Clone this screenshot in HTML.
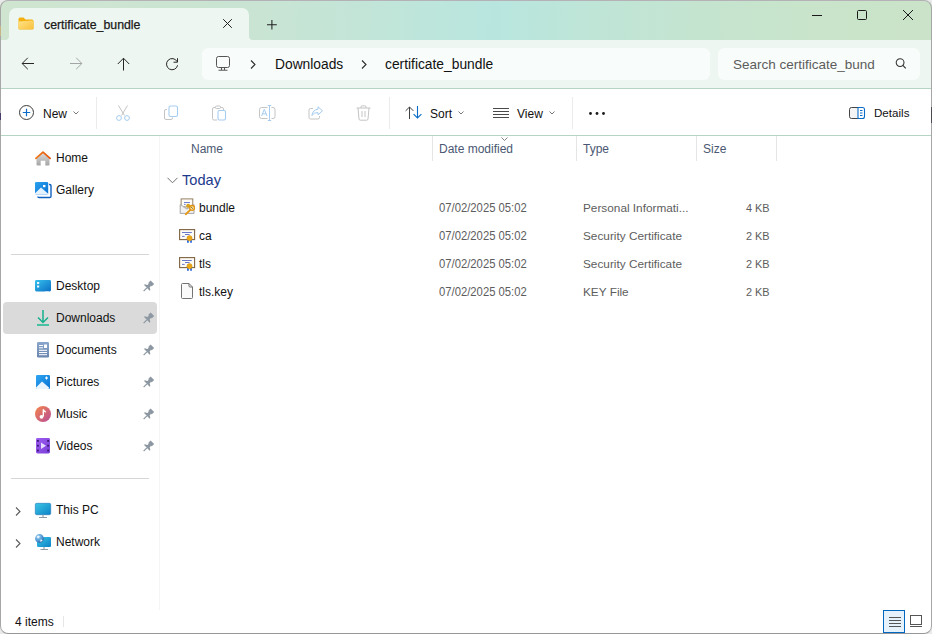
<!DOCTYPE html>
<html><head><meta charset="utf-8">
<style>
*{box-sizing:border-box;margin:0;padding:0}
html,body{width:932px;height:634px;overflow:hidden;background:#e9e9e9;font-family:"Liberation Sans",sans-serif;color:#1b1b1b}
.a{position:absolute}
svg{position:absolute;overflow:visible}
.win{position:absolute;left:0;top:0;width:932px;height:634px;border-radius:8px;overflow:hidden;background:#fff}
.bd{position:absolute;left:0;top:0;width:932px;height:634px;border:1px solid #a6a6a6;border-top-color:#b4b2b6;border-bottom-color:#979797;border-radius:8px}
.t{position:absolute;white-space:nowrap;font-size:12px;line-height:14px}
</style></head><body>
<div class="win">
  <!-- title bar -->
  <div class="a" style="left:0;top:0;width:932px;height:40px;background:linear-gradient(93deg,#cfe5d0 0%,#c9e4d3 28%,#bfe5da 44%,#b8e6df 53%,#bee5d8 62%,#c5e4cf 76%,#c9e4ca 88%,#cae3c9 100%)"></div>
  <!-- tab -->
  <div class="a" style="left:9px;top:8px;width:240px;height:32px;background:#edf6f0;border-radius:7px 7px 0 0"></div>
  <div class="a" style="left:5px;top:36px;width:4px;height:4px;background:#edf6f0"></div>
  <div class="a" style="left:1px;top:28px;width:8px;height:12px;background:#cfe5d0;border-radius:0 0 4px 0"></div>
  <div class="a" style="left:249px;top:36px;width:4px;height:4px;background:#edf6f0"></div>
  <div class="a" style="left:249px;top:28px;width:8px;height:12px;background:#cae4d3;border-radius:0 0 0 4px"></div>
  <!-- folder icon -->
  <svg style="left:18px;top:17px" width="16" height="13" viewBox="0 0 16 13">
    <defs><linearGradient id="fg" x1="0" y1="0" x2="1" y2="1"><stop offset="0" stop-color="#ffe38a"/><stop offset="1" stop-color="#f9c23c"/></linearGradient></defs>
    <path d="M0.5 2 Q0.5 0.5 2 0.5 L5.5 0.5 L7.5 2.5 L14 2.5 Q15.5 2.5 15.5 4 L15.5 11.5 Q15.5 12.5 14.5 12.5 L1.5 12.5 Q0.5 12.5 0.5 11.5Z" fill="#f3b00f"/>
    <path d="M0.5 4.5 L14.5 3.5 Q15.5 3.5 15.5 4.5 L15.5 11 Q15.5 12 14.5 12 L1.5 12 Q0.5 12 0.5 11Z" fill="url(#fg)"/>
  </svg>
  <div class="t" style="left:44px;top:18px;font-size:12.3px;color:#1a1a1a;-webkit-text-stroke:0.25px #1a1a1a">certificate_bundle</div>
  <!-- tab close -->
  <svg style="left:223px;top:19px" width="9" height="9" viewBox="0 0 9 9"><path d="M0.2 0.2L8.8 8.8M8.8 0.2L0.2 8.8" stroke="#222" stroke-width="1"/></svg>
  <!-- new tab plus -->
  <svg style="left:267px;top:20px" width="10" height="10" viewBox="0 0 10 10"><path d="M4.9 0V9.6M0 4.8H9.8" stroke="#222" stroke-width="1.05"/></svg>
  <!-- window controls -->
  <svg style="left:812px;top:15px" width="10" height="1" viewBox="0 0 10 1"><path d="M0 0.5H10" stroke="#1a1a1a" stroke-width="1"/></svg>
  <svg style="left:857px;top:10px" width="10" height="10" viewBox="0 0 10 10"><rect x="0.5" y="0.5" width="9" height="9" rx="1" fill="none" stroke="#1a1a1a" stroke-width="1"/></svg>
  <svg style="left:903px;top:10px" width="10" height="10" viewBox="0 0 10 10"><path d="M0 0L10 10M10 0L0 10" stroke="#1a1a1a" stroke-width="1"/></svg>
  <!-- nav -->
  <div class="a" style="left:0;top:40px;width:932px;height:48px;background:#edf6f0"></div>
  <div class="a" style="left:0;top:88px;width:932px;height:1px;background:#b5d4c4"></div>
  <div class="a" style="left:0;top:135px;width:932px;height:1px;background:#b6d4c3"></div>
  <!-- address & search -->
  <div class="a" style="left:202px;top:48px;width:508px;height:32px;background:#f8fcfa;border-radius:6px"></div>
  <div class="a" style="left:718px;top:48px;width:202px;height:32px;background:#f8fcfa;border-radius:6px"></div>

  <!-- nav buttons -->
  <svg style="left:21px;top:57px" width="14" height="14" viewBox="0 0 14 14"><path d="M13 6.5H1.2M6.8 0.8L1.1 6.5L6.8 12.2" fill="none" stroke="#262626" stroke-width="1"/></svg>
  <svg style="left:69px;top:57px" width="14" height="14" viewBox="0 0 14 14"><path d="M1 6.5H12.8M7.2 0.8L12.9 6.5L7.2 12.2" fill="none" stroke="#a3a5a4" stroke-width="1"/></svg>
  <svg style="left:117px;top:57px" width="13" height="14" viewBox="0 0 13 14"><path d="M6.5 13.5V1.3M0.8 7L6.5 1.2L12.2 7" fill="none" stroke="#262626" stroke-width="1"/></svg>
  <svg style="left:165px;top:57px" width="14" height="14" viewBox="0 0 14 14"><path d="M12.1 4.6A5.6 5.6 0 1 0 12.6 8.3" fill="none" stroke="#262626" stroke-width="1"/><path d="M12.5 1.2V5.2H8.5" fill="none" stroke="#262626" stroke-width="1"/></svg>
  <!-- address -->
  <svg style="left:216px;top:56px" width="15" height="15" viewBox="0 0 15 15"><rect x="0.5" y="0.5" width="13" height="11" rx="2" fill="none" stroke="#555" stroke-width="1"/><path d="M5.5 11.5V13.9M8.5 11.5V13.9" stroke="#555" stroke-width="1.1"/><path d="M2.5 14.2H11.5" stroke="#5a5a5a" stroke-width="1.1"/></svg>
  <svg style="left:250px;top:60px" width="6" height="9" viewBox="0 0 6 9"><path d="M1 0.5L5 4.5L1 8.5" fill="none" stroke="#2b2b2b" stroke-width="1.1"/></svg>
  <div class="t" style="left:275px;top:57px;font-size:13.8px;line-height:16px;color:#111">Downloads</div>
  <svg style="left:361px;top:60px" width="6" height="9" viewBox="0 0 6 9"><path d="M1 0.5L5 4.5L1 8.5" fill="none" stroke="#2b2b2b" stroke-width="1.1"/></svg>
  <div class="t" style="left:385px;top:57px;font-size:13.8px;line-height:16px;color:#111">certificate_bundle</div>
  <!-- search -->
  <div class="t" style="left:733px;top:57px;font-size:13.5px;line-height:16px;color:#5c5c5c">Search certificate_bund</div>
  <svg style="left:895px;top:58px" width="12" height="12" viewBox="0 0 12 12"><circle cx="5.1" cy="4.6" r="3.9" fill="none" stroke="#333" stroke-width="1.05"/><path d="M7.9 7.4L10.8 10.4" stroke="#333" stroke-width="1.15"/></svg>

  <!-- toolbar -->
  <svg style="left:19px;top:105px" width="15" height="15" viewBox="0 0 15 15"><circle cx="7.5" cy="7.5" r="7" fill="none" stroke="#3b3b3b" stroke-width="1"/><path d="M7.5 3.8V11.2M3.8 7.5H11.2" stroke="#0b6cc8" stroke-width="1.2"/></svg>
  <div class="t" style="left:43px;top:107px;font-size:12px;color:#111">New</div>
  <svg style="left:73px;top:111px" width="6" height="4" viewBox="0 0 6 4"><path d="M0.5 0.5L3 3L5.5 0.5" fill="none" stroke="#777" stroke-width="1"/></svg>
  <div class="a" style="left:96px;top:97px;width:1px;height:32px;background:#ebebeb"></div>
  <!-- cut -->
  <svg style="left:115px;top:105px" width="16" height="16" viewBox="0 0 16 16"><path d="M3.5 0.5L9.5 10.5M12.5 0.5L6.5 10.5" stroke="#c4c4c4" stroke-width="1"/><circle cx="4" cy="13" r="2.4" fill="none" stroke="#a6cdf0" stroke-width="1"/><circle cx="12" cy="13" r="2.4" fill="none" stroke="#a6cdf0" stroke-width="1"/></svg>
  <!-- copy -->
  <svg style="left:163px;top:105px" width="16" height="16" viewBox="0 0 16 16"><path d="M4 4.5H3Q1.5 4.5 1.5 6V13Q1.5 14.5 3 14.5H8Q9.5 14.5 9.5 13V12.5" fill="none" stroke="#c4c4c4" stroke-width="1"/><rect x="6" y="1" width="8.5" height="10.5" rx="1.6" fill="none" stroke="#a6cdf0" stroke-width="1.1"/></svg>
  <!-- paste -->
  <svg style="left:211px;top:105px" width="16" height="16" viewBox="0 0 16 16"><path d="M9.5 2.5H11Q12.5 2.5 12.5 4V5M6 15H3Q1.5 15 1.5 13.5V4Q1.5 2.5 3 2.5H4.5" fill="none" stroke="#c4c4c4" stroke-width="1"/><rect x="4.5" y="1" width="5" height="2.5" rx="1" fill="none" stroke="#c4c4c4" stroke-width="1"/><rect x="7" y="5.5" width="7.5" height="9.5" rx="1.4" fill="none" stroke="#a6cdf0" stroke-width="1.1"/></svg>
  <!-- rename -->
  <svg style="left:259px;top:105px" width="17" height="16" viewBox="0 0 17 16"><path d="M8.5 2.5H2.5Q0.5 2.5 0.5 4.5V11.5Q0.5 13.5 2.5 13.5H8.5M12.5 2.5H14Q16 2.5 16 4.5V11.5Q16 13.5 14 13.5H12.5" fill="none" stroke="#c4c4c4" stroke-width="1"/><path d="M10.5 0.5V15.5M8.8 0.5H12.2M8.8 15.5H12.2" stroke="#a6cdf0" stroke-width="1"/><path d="M2.6 11L5.3 4.3L8 11M3.6 8.8H7" fill="none" stroke="#a6cdf0" stroke-width="1"/></svg>
  <!-- share -->
  <svg style="left:308px;top:106px" width="16" height="14" viewBox="0 0 16 14"><path d="M5 2.5H2.5Q1 2.5 1 4V11.5Q1 13 2.5 13H10Q11.5 13 11.5 11.5V10" fill="none" stroke="#c4c4c4" stroke-width="1"/><path d="M10 0.8L14.5 4.8L10 8.8V6.6Q6 6.2 3.8 9.5Q4.8 3.8 10 3.2Z" fill="none" stroke="#a6cdf0" stroke-width="1" stroke-linejoin="round"/></svg>
  <!-- delete -->
  <svg style="left:356px;top:105px" width="15" height="16" viewBox="0 0 15 16"><path d="M0.5 3H14.5M5 3V2Q5 0.8 6.2 0.8H8.8Q10 0.8 10 2V3M2 3L3 14Q3.1 15.2 4.3 15.2H10.7Q11.9 15.2 12 14L13 3M6 6V12M9 6V12" fill="none" stroke="#c4c4c4" stroke-width="1"/></svg>
  <div class="a" style="left:389px;top:97px;width:1px;height:32px;background:#ebebeb"></div>
  <!-- sort -->
  <svg style="left:405px;top:106px" width="17" height="13" viewBox="0 0 17 13"><path d="M4.5 13V1M0.6 4.9L4.5 1L8.4 4.9" fill="none" stroke="#404040" stroke-width="1"/><path d="M12.5 0V12M8.6 8.1L12.5 12L16.4 8.1" fill="none" stroke="#0b6cc8" stroke-width="1.1"/></svg>
  <div class="t" style="left:430px;top:107px;font-size:12px;color:#111">Sort</div>
  <svg style="left:458px;top:111px" width="6" height="4" viewBox="0 0 6 4"><path d="M0.5 0.5L3 3L5.5 0.5" fill="none" stroke="#777" stroke-width="1"/></svg>
  <!-- view -->
  <svg style="left:493px;top:107px" width="16" height="11" viewBox="0 0 16 11"><path d="M0 1.5H16M0 4.5H16M0 7.5H16M0 10.5H16" stroke="#4a4a4a" stroke-width="1"/></svg>
  <div class="t" style="left:517px;top:107px;font-size:12px;color:#111">View</div>
  <svg style="left:549px;top:111px" width="6" height="4" viewBox="0 0 6 4"><path d="M0.5 0.5L3 3L5.5 0.5" fill="none" stroke="#777" stroke-width="1"/></svg>
  <div class="a" style="left:572px;top:97px;width:1px;height:32px;background:#ebebeb"></div>
  <!-- more -->
  <svg style="left:589px;top:112px" width="16" height="3" viewBox="0 0 16 3"><circle cx="1.5" cy="1.5" r="1.4" fill="#1a1a1a"/><circle cx="8" cy="1.5" r="1.4" fill="#1a1a1a"/><circle cx="14.5" cy="1.5" r="1.4" fill="#1a1a1a"/></svg>
  <!-- details -->
  <svg style="left:849px;top:107px" width="16" height="12" viewBox="0 0 16 12"><path d="M9 0.5H2.5Q0.5 0.5 0.5 2.5V9.5Q0.5 11.5 2.5 11.5H9" fill="#f4f4f4" stroke="#444" stroke-width="1"/><path d="M9 0.5H13.5Q15.5 0.5 15.5 2.5V9.5Q15.5 11.5 13.5 11.5H9Z" fill="none" stroke="#0b6cc8" stroke-width="1.1"/><path d="M11 3.5H13.5M11 6H13.5M11 8.5H13.5" stroke="#0b6cc8" stroke-width="1"/></svg>
  <div class="t" style="left:874px;top:106px;font-size:11.6px;color:#111">Details</div>

  <!-- sidebar -->
  <div class="a" style="left:159px;top:136px;width:1px;height:474px;background:#f5f5f5"></div>
  <!-- home -->
  <svg style="left:35px;top:151px" width="16" height="15" viewBox="0 0 16 15">
    <defs><linearGradient id="hg" x1="0" y1="0" x2="0" y2="1"><stop offset="0" stop-color="#dcdcdc"/><stop offset="1" stop-color="#a4a4a4"/></linearGradient>
    <linearGradient id="rg" x1="0" y1="0" x2="1" y2="0"><stop offset="0" stop-color="#f27a1a"/><stop offset="1" stop-color="#e4570e"/></linearGradient></defs>
    <path d="M1.5 7.2L8 1.8L14.5 7.2V13.6Q14.5 14.6 13.5 14.6H10.3V9.8H5.7V14.6H2.5Q1.5 14.6 1.5 13.6Z" fill="url(#hg)"/>
    <path d="M0.9 7.4L8 1.1L15.1 7.4" fill="none" stroke="url(#rg)" stroke-width="1.8" stroke-linejoin="round" stroke-linecap="round"/>
  </svg>
  <div class="t" style="left:56px;top:151px;color:#111">Home</div>
  <!-- gallery -->
  <svg style="left:35px;top:182px" width="17" height="16" viewBox="0 0 17 16">
    <defs><linearGradient id="gg" x1="0" y1="0" x2="1" y2="1"><stop offset="0" stop-color="#2aa3f0"/><stop offset="1" stop-color="#0a6fd0"/></linearGradient></defs>
    <path d="M14 2.5H14.7Q16 2.5 16 3.8V14.2Q16 15.5 14.7 15.5H4Q2.8 15.5 2.8 14.5" fill="none" stroke="#1060c0" stroke-width="1.4"/>
    <rect x="0" y="0" width="13.2" height="12.5" rx="1.3" fill="url(#gg)"/>
    <path d="M0 11.2L6 5.5L13.2 11.8V12.5H0Z" fill="#e4f2ff"/>
    <rect x="8" y="3" width="2.4" height="2.2" fill="#fff"/>
  </svg>
  <div class="t" style="left:56px;top:183px;color:#111">Gallery</div>
  <div class="a" style="left:11px;top:254px;width:138px;height:1px;background:#d6d6d6"></div>
  <!-- desktop -->
  <svg style="left:35px;top:280px" width="16" height="12" viewBox="0 0 16 12">
    <defs><linearGradient id="dg" x1="0" y1="0" x2="1" y2="1"><stop offset="0" stop-color="#36c1ec"/><stop offset="1" stop-color="#0b6fc6"/></linearGradient></defs>
    <rect x="0" y="0" width="16" height="11.5" rx="1.4" fill="url(#dg)"/>
    <rect x="2" y="2" width="2.2" height="2" fill="#e8f7ff"/><rect x="2" y="5.5" width="2.2" height="2" fill="#e8f7ff"/>
    <path d="M10.5 11.5H11.5M12.5 11.5H13.5" stroke="#fff" stroke-width="1"/>
  </svg>
  <div class="t" style="left:56px;top:279px;color:#111">Desktop</div>
  <svg style="left:143px;top:281px" width="12" height="12" viewBox="0 0 12 12"><g transform="translate(5.3 5.4) rotate(45)"><path d="M-2.5 -5.8H2.5V-2.6L1.6 -2.1V-0.4L4 1.1V2H-4V1.1L-1.6 -0.4V-2.1L-2.5 -2.6Z" fill="#8d98a2"/><path d="M0 2V6.6" stroke="#8d98a2" stroke-width="1.2"/></g></svg>
  <!-- downloads selected -->
  <div class="a" style="left:3px;top:302px;width:154px;height:32px;background:#dadada;border-radius:4px"></div>
  <svg style="left:37px;top:310px" width="12" height="16" viewBox="0 0 12 16"><path d="M6 0V12M1 7.5L6 12.5L11 7.5" fill="none" stroke="#16b08d" stroke-width="1.5"/><path d="M0 15H12" stroke="#17b88f" stroke-width="1.5"/></svg>
  <div class="t" style="left:56px;top:311px;color:#111">Downloads</div>
  <svg style="left:143px;top:313px" width="12" height="12" viewBox="0 0 12 12"><g transform="translate(5.3 5.4) rotate(45)"><path d="M-2.5 -5.8H2.5V-2.6L1.6 -2.1V-0.4L4 1.1V2H-4V1.1L-1.6 -0.4V-2.1L-2.5 -2.6Z" fill="#8d98a2"/><path d="M0 2V6.6" stroke="#8d98a2" stroke-width="1.2"/></g></svg>
  <!-- documents -->
  <svg style="left:37px;top:342px" width="12" height="16" viewBox="0 0 12 16">
    <defs><linearGradient id="docg" x1="0" y1="0" x2="0" y2="1"><stop offset="0" stop-color="#8aa6cc"/><stop offset="1" stop-color="#6a86ae"/></linearGradient></defs>
    <rect x="0" y="0" width="12" height="15.5" rx="1.2" fill="url(#docg)"/>
    <path d="M2 3.5H6M2 5.8H6M2 8.3H10M2 10.5H10M2 12.7H10" stroke="#fff" stroke-width="1"/><rect x="7" y="2.5" width="3" height="3.5" fill="#fff"/>
  </svg>
  <div class="t" style="left:56px;top:343px;color:#111">Documents</div>
  <svg style="left:143px;top:345px" width="12" height="12" viewBox="0 0 12 12"><g transform="translate(5.3 5.4) rotate(45)"><path d="M-2.5 -5.8H2.5V-2.6L1.6 -2.1V-0.4L4 1.1V2H-4V1.1L-1.6 -0.4V-2.1L-2.5 -2.6Z" fill="#8d98a2"/><path d="M0 2V6.6" stroke="#8d98a2" stroke-width="1.2"/></g></svg>
  <!-- pictures -->
  <svg style="left:36px;top:375px" width="14" height="14" viewBox="0 0 14 14">
    <defs><linearGradient id="pg" x1="0" y1="0" x2="1" y2="1"><stop offset="0" stop-color="#2ea6f2"/><stop offset="1" stop-color="#0b72d4"/></linearGradient></defs>
    <rect x="0" y="0" width="14" height="14" rx="1.3" fill="url(#pg)"/>
    <path d="M0 12.5L6 6.5L13 12.5V13Q13 14 12 14H1Q0 14 0 13Z" fill="#eaf5ff"/>
    <path d="M10.5 1.5V4.5M9 3H12" stroke="#fff" stroke-width="1.1"/>
  </svg>
  <div class="t" style="left:56px;top:375px;color:#111">Pictures</div>
  <svg style="left:143px;top:377px" width="12" height="12" viewBox="0 0 12 12"><g transform="translate(5.3 5.4) rotate(45)"><path d="M-2.5 -5.8H2.5V-2.6L1.6 -2.1V-0.4L4 1.1V2H-4V1.1L-1.6 -0.4V-2.1L-2.5 -2.6Z" fill="#8d98a2"/><path d="M0 2V6.6" stroke="#8d98a2" stroke-width="1.2"/></g></svg>
  <!-- music -->
  <svg style="left:35px;top:406px" width="16" height="16" viewBox="0 0 16 16">
    <defs><linearGradient id="mg" x1="0" y1="0" x2="1" y2="1"><stop offset="0" stop-color="#f5874a"/><stop offset="1" stop-color="#b74b98"/></linearGradient></defs>
    <circle cx="8" cy="8" r="8" fill="url(#mg)"/>
    <path d="M8.3 3.5V10.5" stroke="#fff" stroke-width="1.4"/><circle cx="6.5" cy="10.8" r="1.9" fill="#fff"/><path d="M8.3 3.5Q9 5.5 10.8 6" fill="none" stroke="#fff" stroke-width="1.3"/>
  </svg>
  <div class="t" style="left:56px;top:407px;color:#111">Music</div>
  <svg style="left:143px;top:409px" width="12" height="12" viewBox="0 0 12 12"><g transform="translate(5.3 5.4) rotate(45)"><path d="M-2.5 -5.8H2.5V-2.6L1.6 -2.1V-0.4L4 1.1V2H-4V1.1L-1.6 -0.4V-2.1L-2.5 -2.6Z" fill="#8d98a2"/><path d="M0 2V6.6" stroke="#8d98a2" stroke-width="1.2"/></g></svg>
  <!-- videos -->
  <svg style="left:36px;top:438px" width="14" height="16" viewBox="0 0 14 16">
    <defs><linearGradient id="vg" x1="0" y1="0" x2="1" y2="1"><stop offset="0" stop-color="#9d5cf0"/><stop offset="1" stop-color="#7a3fd8"/></linearGradient></defs>
    <rect x="0" y="0" width="14" height="15.5" rx="1.4" fill="url(#vg)"/>
    <rect x="1" y="2" width="1.8" height="1.8" fill="#3a1a70"/><rect x="1" y="6.8" width="1.8" height="1.8" fill="#3a1a70"/><rect x="1" y="11.6" width="1.8" height="1.8" fill="#3a1a70"/>
    <rect x="11.2" y="2" width="1.8" height="1.8" fill="#3a1a70"/><rect x="11.2" y="6.8" width="1.8" height="1.8" fill="#3a1a70"/><rect x="11.2" y="11.6" width="1.8" height="1.8" fill="#3a1a70"/>
    <path d="M5 4.5L10 7.8L5 11Z" fill="#e6dcff"/>
  </svg>
  <div class="t" style="left:56px;top:439px;color:#111">Videos</div>
  <svg style="left:143px;top:441px" width="12" height="12" viewBox="0 0 12 12"><g transform="translate(5.3 5.4) rotate(45)"><path d="M-2.5 -5.8H2.5V-2.6L1.6 -2.1V-0.4L4 1.1V2H-4V1.1L-1.6 -0.4V-2.1L-2.5 -2.6Z" fill="#8d98a2"/><path d="M0 2V6.6" stroke="#8d98a2" stroke-width="1.2"/></g></svg>
  <div class="a" style="left:11px;top:478px;width:138px;height:1px;background:#d6d6d6"></div>
  <!-- this pc -->
  <svg style="left:15px;top:507px" width="6" height="9" viewBox="0 0 6 9"><path d="M1 0.5L5 4.5L1 8.5" fill="none" stroke="#5a5a5a" stroke-width="1.1"/></svg>
  <svg style="left:35px;top:503px" width="16" height="15" viewBox="0 0 16 15">
    <defs><linearGradient id="tg" x1="0" y1="0" x2="1" y2="1"><stop offset="0" stop-color="#3cc6e6"/><stop offset="1" stop-color="#0c82c6"/></linearGradient></defs>
    <rect x="0.3" y="0.3" width="15.4" height="11.4" rx="1.4" fill="url(#tg)" stroke="#1a76b8" stroke-width="0.6"/>
    <path d="M8 11.8V14M4 14.5H12" stroke="#8e9aa6" stroke-width="1.1"/>
  </svg>
  <div class="t" style="left:56px;top:503px;color:#111">This PC</div>
  <!-- network -->
  <svg style="left:15px;top:539px" width="6" height="9" viewBox="0 0 6 9"><path d="M1 0.5L5 4.5L1 8.5" fill="none" stroke="#5a5a5a" stroke-width="1.1"/></svg>
  <svg style="left:35px;top:534px" width="16" height="17" viewBox="0 0 16 17">
    <rect x="2" y="3" width="14" height="10" rx="1.3" fill="url(#tg)"/>
    <path d="M9 13V15M5.5 15.5H13" stroke="#8e9aa6" stroke-width="1.1"/>
    <defs><radialGradient id="glg" cx="0.35" cy="0.3" r="0.8"><stop offset="0" stop-color="#a9d8f6"/><stop offset="0.6" stop-color="#4a94d2"/><stop offset="1" stop-color="#2a5f9c"/></radialGradient></defs><circle cx="4.5" cy="4.5" r="4.4" fill="url(#glg)"/><path d="M2 2.2Q3.5 1.2 4.8 2.6Q4.5 4 3 4.2Q1.8 3.8 2 2.2Z M5.5 5.5Q7 5 7.6 6.5Q6.5 8 5.2 7.5Z" fill="#eaf5fc"/>
  </svg>
  <div class="t" style="left:56px;top:535px;color:#111">Network</div>
  <!-- status -->
  <div class="t" style="left:15px;top:615px;color:#111">4 items</div>
  <div class="a" style="left:63px;top:616px;width:1px;height:11px;background:#e6e6e6"></div>
  <div class="a" style="left:883px;top:610px;width:22px;height:23px;background:#e5f1fb;border:1px solid #0067c0"></div>
  <svg style="left:889px;top:617px" width="12" height="10" viewBox="0 0 12 10"><path d="M0 0.5H12M0 3.5H12M0 6.5H12M0 9.5H12" stroke="#555" stroke-width="1"/></svg>
  <svg style="left:910px;top:615px" width="12" height="12" viewBox="0 0 12 12"><rect x="0.5" y="0.5" width="11" height="9" fill="none" stroke="#555" stroke-width="1"/><path d="M0 11.5H12" stroke="#555" stroke-width="1"/></svg>

  <!-- column headers -->
  <div class="t" style="left:191px;top:142px;color:#4b5873">Name</div>
  <svg style="left:501px;top:137px" width="7" height="4" viewBox="0 0 7 4"><path d="M0.5 0.5L3.5 3.5L6.5 0.5" fill="none" stroke="#777" stroke-width="0.9"/></svg>
  <div class="a" style="left:432px;top:136px;width:1px;height:25px;background:#e5e5e5"></div>
  <div class="t" style="left:439px;top:142px;color:#4b5873">Date modified</div>
  <div class="a" style="left:576px;top:136px;width:1px;height:25px;background:#e5e5e5"></div>
  <div class="t" style="left:583px;top:142px;color:#4b5873">Type</div>
  <div class="a" style="left:696px;top:136px;width:1px;height:25px;background:#e5e5e5"></div>
  <div class="t" style="left:703px;top:142px;color:#4b5873">Size</div>
  <div class="a" style="left:776px;top:136px;width:1px;height:25px;background:#e5e5e5"></div>
  <!-- group -->
  <svg style="left:167px;top:177px" width="11" height="7" viewBox="0 0 11 7"><path d="M0.5 0.8L5.5 5.8L10.5 0.8" fill="none" stroke="#707070" stroke-width="1"/></svg>
  <div class="t" style="left:182px;top:172px;font-size:14.6px;line-height:17px;color:#1d3a8c">Today</div>
  <!-- rows -->
  <svg style="left:179px;top:198px" width="17" height="17" viewBox="0 0 17 17">
    <rect x="2.1" y="0.9" width="11.7" height="8" fill="#fcfbf8" stroke="#8c7352" stroke-width="0.9"/>
    <path d="M5 4.5H11M5 6.4H6.6" stroke="#6070cc" stroke-width="0.9"/>
    <path d="M1.2 6.6V15.4H15V6.6L8 11Z" fill="#f2f2f2" stroke="#9c9c9c" stroke-width="0.9" stroke-linejoin="round"/>
    <path d="M1.5 7L7.5 11.2" stroke="#c8c8c8" stroke-width="0.7"/>
    <circle cx="9.2" cy="7.8" r="2" fill="#d6a11c"/>
    <path d="M11.6 11.6L6.8 16.2" stroke="#e59a1c" stroke-width="1.9" stroke-linecap="round"/>
    <circle cx="13.1" cy="9.9" r="2.4" fill="#fbe5a0" stroke="#de9214" stroke-width="1.3"/>
    <path d="M12.4 9.2L13.6 10.6" stroke="#6a4a10" stroke-width="1"/>
  </svg>
  <div class="t" style="left:199px;top:201px;color:#111">bundle</div>
  <div class="t" style="left:439px;top:201px;color:#5d5d5d;font-size:12.2px;transform:scaleX(0.925);transform-origin:0 0">07/02/2025 05:02</div>
  <div class="t" style="left:583px;top:201px;color:#5d5d5d;font-size:11.8px">Personal Informati...</div>
  <div class="t" style="left:746px;top:201px;color:#5d5d5d;font-size:10.9px">4 KB</div>
  <svg style="left:179px;top:229px" width="16" height="14" viewBox="0 0 16 14">
    <rect x="0.6" y="0.6" width="15" height="10" fill="#fdfbf5" stroke="#7f6443" stroke-width="1.1"/>
    <path d="M3 3.5H12.8M6 5.5H10.6M3 7.4H5.7" stroke="#5a69c4" stroke-width="0.9"/>
    <path d="M8.2 10.6H9.9L9.8 13.8L8 13.8Z M11.1 10.6H12.8L12.9 13.8L11.2 13.8Z" fill="#2563de"/>
    <circle cx="10.5" cy="9.2" r="2.6" fill="#eaa818" stroke="#cf8c0c" stroke-width="0.5"/>
  </svg>
  <div class="t" style="left:199px;top:229px;color:#111">ca</div>
  <div class="t" style="left:439px;top:229px;color:#5d5d5d;font-size:12.2px;transform:scaleX(0.925);transform-origin:0 0">07/02/2025 05:02</div>
  <div class="t" style="left:583px;top:229px;color:#5d5d5d;font-size:11.8px">Security Certificate</div>
  <div class="t" style="left:746px;top:229px;color:#5d5d5d;font-size:10.9px">2 KB</div>
  <svg style="left:179px;top:257px" width="16" height="14" viewBox="0 0 16 14">
    <rect x="0.6" y="0.6" width="15" height="10" fill="#fdfbf5" stroke="#7f6443" stroke-width="1.1"/>
    <path d="M3 3.5H12.8M6 5.5H10.6M3 7.4H5.7" stroke="#5a69c4" stroke-width="0.9"/>
    <path d="M8.2 10.6H9.9L9.8 13.8L8 13.8Z M11.1 10.6H12.8L12.9 13.8L11.2 13.8Z" fill="#2563de"/>
    <circle cx="10.5" cy="9.2" r="2.6" fill="#eaa818" stroke="#cf8c0c" stroke-width="0.5"/>
  </svg>
  <div class="t" style="left:199px;top:257px;color:#111">tls</div>
  <div class="t" style="left:439px;top:257px;color:#5d5d5d;font-size:12.2px;transform:scaleX(0.925);transform-origin:0 0">07/02/2025 05:02</div>
  <div class="t" style="left:583px;top:257px;color:#5d5d5d;font-size:11.8px">Security Certificate</div>
  <div class="t" style="left:746px;top:257px;color:#5d5d5d;font-size:10.9px">2 KB</div>
  <svg style="left:181px;top:283px" width="12" height="16" viewBox="0 0 12 16"><path d="M1.5 0.5H8L11.5 4V14.5Q11.5 15.5 10.5 15.5H1.5Q0.5 15.5 0.5 14.5V1.5Q0.5 0.5 1.5 0.5Z" fill="#fafafa" stroke="#737373" stroke-width="1"/><path d="M8 0.5V3Q8 4 9 4H11.5" fill="none" stroke="#737373" stroke-width="1"/></svg>
  <div class="t" style="left:199px;top:285px;color:#111">tls.key</div>
  <div class="t" style="left:439px;top:285px;color:#5d5d5d;font-size:12.2px;transform:scaleX(0.925);transform-origin:0 0">07/02/2025 05:02</div>
  <div class="t" style="left:583px;top:285px;color:#5d5d5d;font-size:11.8px">KEY File</div>
  <div class="t" style="left:746px;top:285px;color:#5d5d5d;font-size:10.9px">2 KB</div>
</div>
<div class="bd"></div>
<div class="a" style="left:931px;top:107px;width:1px;height:16px;background:#4a4a52"></div>
<div class="a" style="left:0;top:113px;width:1px;height:7px;background:#4a3d6a"></div>
<div class="a" style="left:0;top:26px;width:1px;height:10px;background:#c9b486"></div>
</body></html>
